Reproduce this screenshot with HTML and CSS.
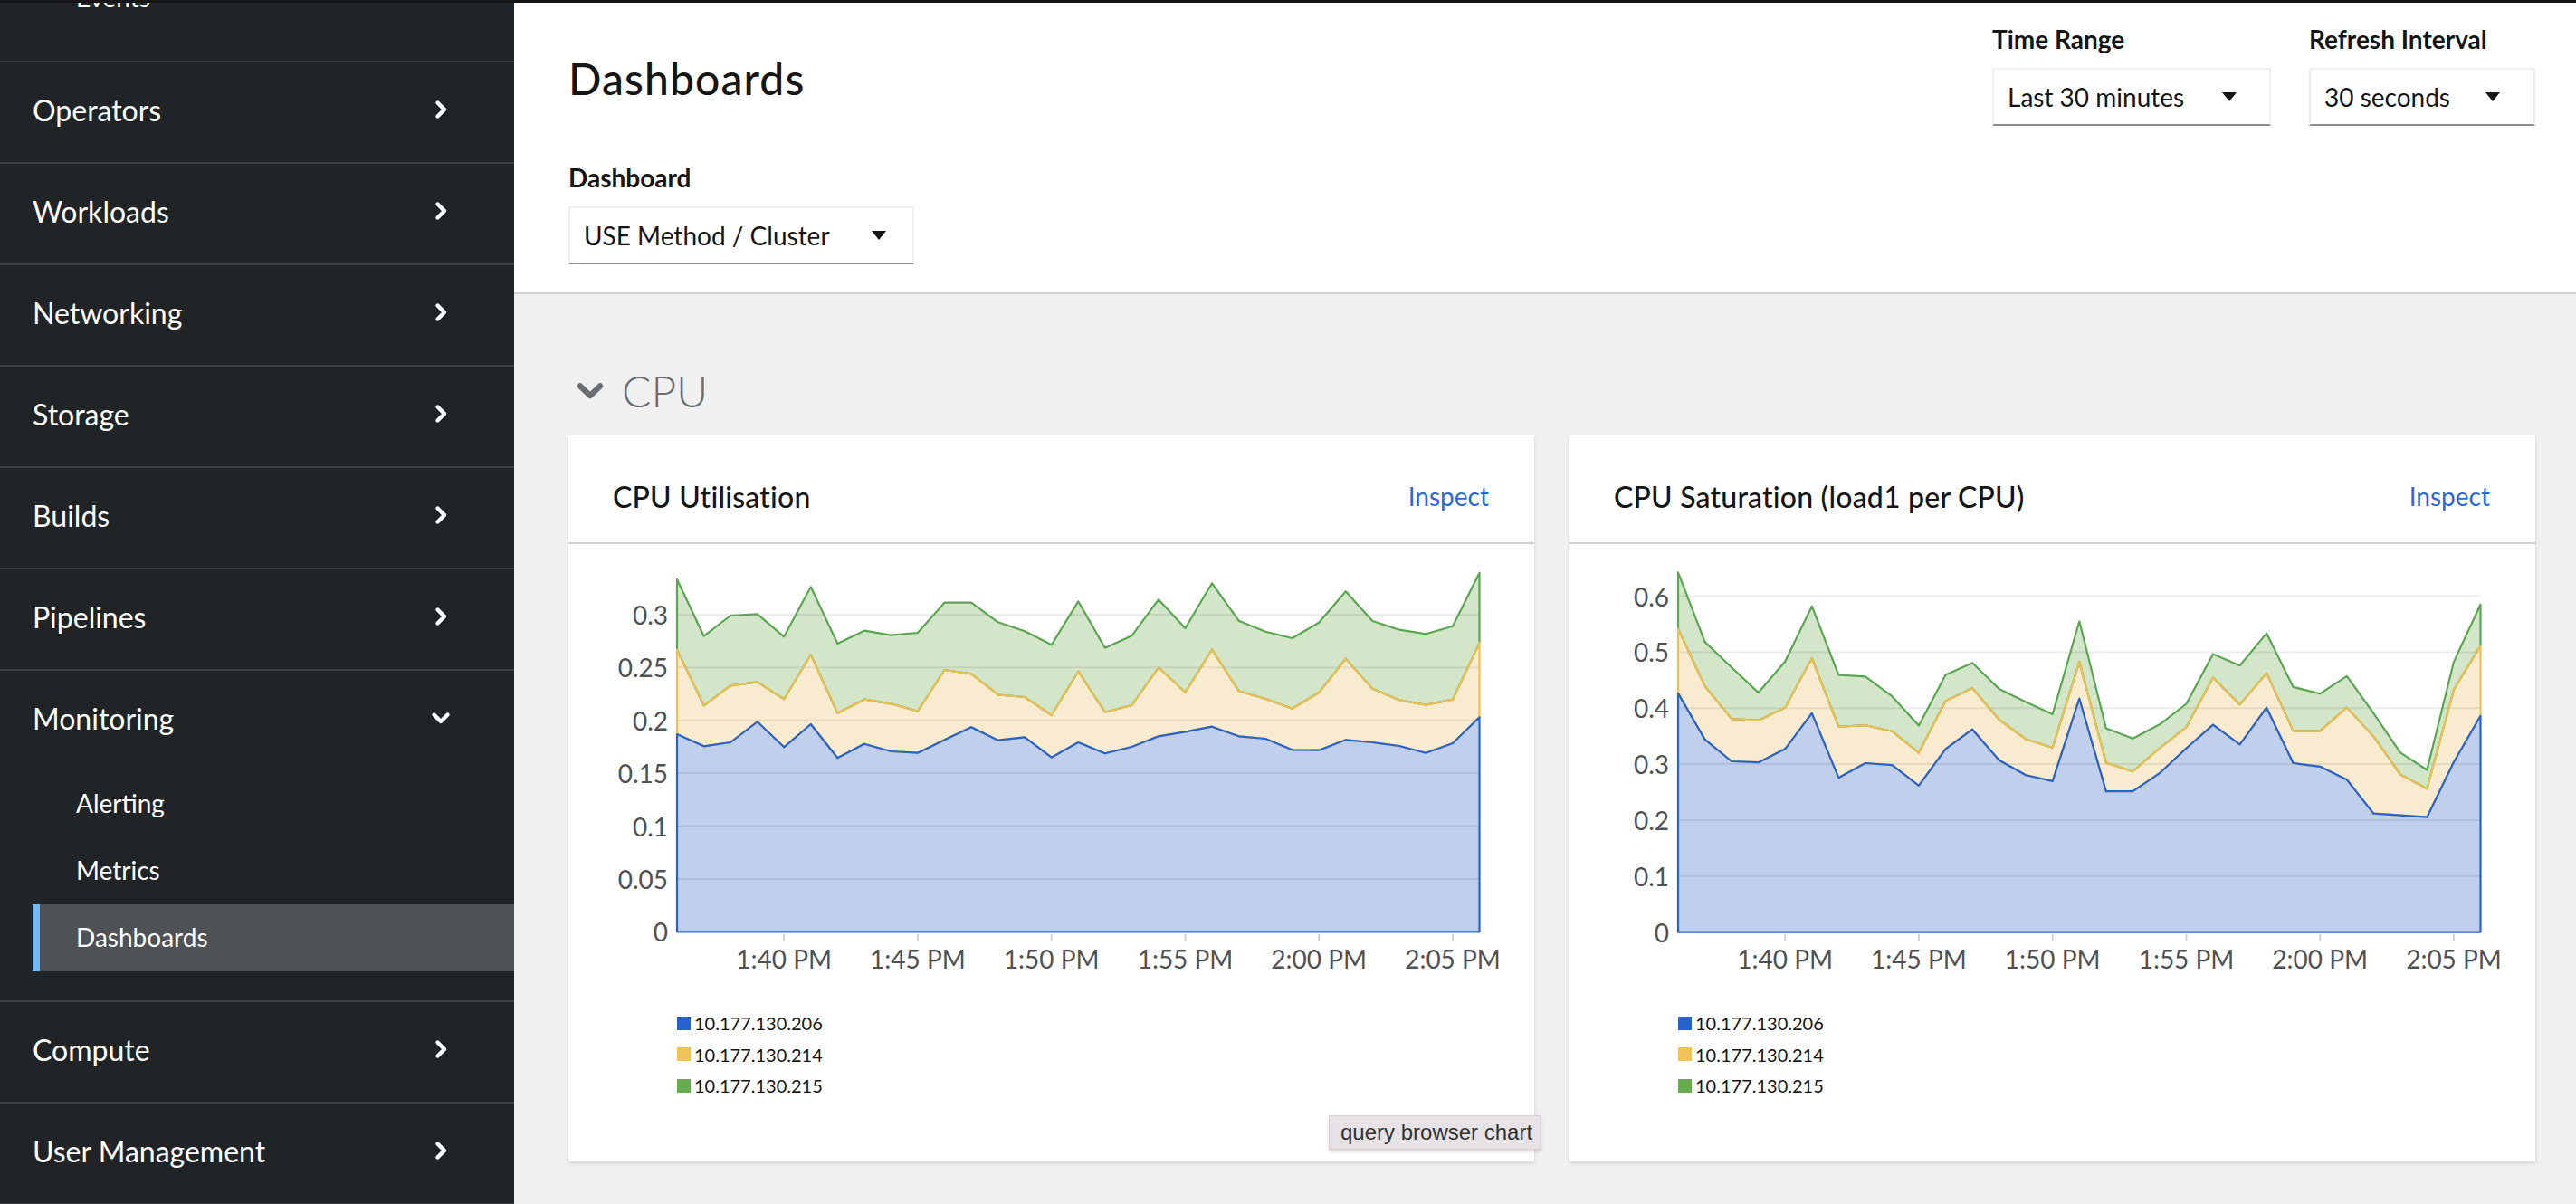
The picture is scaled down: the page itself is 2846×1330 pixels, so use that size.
FILE: index.html
```html
<!DOCTYPE html>
<html lang="en">
<head>
<meta charset="utf-8">
<title>Dashboards</title>
<link rel="stylesheet" href="styles.css">
</head>
<body>
<div class="app">
  <div class="topbar"></div>
  <div class="layout">
    <nav class="sidebar">
      <div class="nav">
        <section class="nav-section">
          <ul class="subnav">
            <li><a class="subnav-link">Events</a></li>
          </ul>
        </section>
        <section class="nav-section">
          <a class="nav-link"><span>Operators</span><span class="nav-icon"><svg width="15" height="22" viewBox="0 0 15 22"><path d="M3.5 3.5 L11 11 L3.5 18.5" fill="none" stroke="#fff" stroke-width="4.4" stroke-linecap="round" stroke-linejoin="round"/></svg></span></a>
        </section>
        <section class="nav-section">
          <a class="nav-link"><span>Workloads</span><span class="nav-icon"><svg width="15" height="22" viewBox="0 0 15 22"><path d="M3.5 3.5 L11 11 L3.5 18.5" fill="none" stroke="#fff" stroke-width="4.4" stroke-linecap="round" stroke-linejoin="round"/></svg></span></a>
        </section>
        <section class="nav-section">
          <a class="nav-link"><span>Networking</span><span class="nav-icon"><svg width="15" height="22" viewBox="0 0 15 22"><path d="M3.5 3.5 L11 11 L3.5 18.5" fill="none" stroke="#fff" stroke-width="4.4" stroke-linecap="round" stroke-linejoin="round"/></svg></span></a>
        </section>
        <section class="nav-section">
          <a class="nav-link"><span>Storage</span><span class="nav-icon"><svg width="15" height="22" viewBox="0 0 15 22"><path d="M3.5 3.5 L11 11 L3.5 18.5" fill="none" stroke="#fff" stroke-width="4.4" stroke-linecap="round" stroke-linejoin="round"/></svg></span></a>
        </section>
        <section class="nav-section">
          <a class="nav-link"><span>Builds</span><span class="nav-icon"><svg width="15" height="22" viewBox="0 0 15 22"><path d="M3.5 3.5 L11 11 L3.5 18.5" fill="none" stroke="#fff" stroke-width="4.4" stroke-linecap="round" stroke-linejoin="round"/></svg></span></a>
        </section>
        <section class="nav-section">
          <a class="nav-link"><span>Pipelines</span><span class="nav-icon"><svg width="15" height="22" viewBox="0 0 15 22"><path d="M3.5 3.5 L11 11 L3.5 18.5" fill="none" stroke="#fff" stroke-width="4.4" stroke-linecap="round" stroke-linejoin="round"/></svg></span></a>
        </section>
        <section class="nav-section">
          <a class="nav-link"><span>Monitoring</span><span class="nav-icon"><svg width="22" height="15" viewBox="0 0 22 15"><path d="M3.5 3.5 L11 11 L18.5 3.5" fill="none" stroke="#fff" stroke-width="4.4" stroke-linecap="round" stroke-linejoin="round"/></svg></span></a>
          <ul class="subnav">
            <li><a class="subnav-link">Alerting</a></li>
            <li><a class="subnav-link">Metrics</a></li>
            <li><a class="subnav-link is-current">Dashboards</a></li>
          </ul>
        </section>
        <section class="nav-section">
          <a class="nav-link"><span>Compute</span><span class="nav-icon"><svg width="15" height="22" viewBox="0 0 15 22"><path d="M3.5 3.5 L11 11 L3.5 18.5" fill="none" stroke="#fff" stroke-width="4.4" stroke-linecap="round" stroke-linejoin="round"/></svg></span></a>
        </section>
        <section class="nav-section">
          <a class="nav-link"><span>User Management</span><span class="nav-icon"><svg width="15" height="22" viewBox="0 0 15 22"><path d="M3.5 3.5 L11 11 L3.5 18.5" fill="none" stroke="#fff" stroke-width="4.4" stroke-linecap="round" stroke-linejoin="round"/></svg></span></a>
        </section>
      </div>
    </nav>

    <main class="main">
      <header class="page-header">
        <div class="header-left">
          <h1 class="page-title">Dashboards</h1>
          <div class="field field--dashboard">
            <div class="field-label">Dashboard</div>
            <div class="select select--dashboard"><span>USE Method / Cluster</span><svg class="caret" width="16" height="10" viewBox="0 0 16 10"><polygon points="0,0 16,0 8,10" fill="#151515"/></svg></div>
          </div>
        </div>
        <div class="header-right">
          <div class="field">
            <div class="field-label">Time Range</div>
            <div class="select select--time"><span>Last 30 minutes</span><svg class="caret" width="16" height="10" viewBox="0 0 16 10"><polygon points="0,0 16,0 8,10" fill="#151515"/></svg></div>
          </div>
          <div class="field">
            <div class="field-label">Refresh Interval</div>
            <div class="select select--refresh"><span>30 seconds</span><svg class="caret" width="16" height="10" viewBox="0 0 16 10"><polygon points="0,0 16,0 8,10" fill="#151515"/></svg></div>
          </div>
        </div>
      </header>

      <div class="content">
        <h2 class="group-title"><svg class="group-chevron" width="30" height="20" viewBox="0 0 30 20"><path d="M4 4.5 L15 15 L26 4.5" fill="none" stroke="#6a6e73" stroke-width="6.5" stroke-linecap="round" stroke-linejoin="round"/></svg><span>CPU</span></h2>
        <div class="cards">
          <article class="card">
            <div class="card-header">
              <h3 class="card-title">CPU Utilisation</h3>
              <a class="card-link">Inspect</a>
            </div>
            <div class="card-body">
              <svg class="chart" id="chart-util" width="1067" height="480"></svg>
              <ul class="legend">
                <li><span class="swatch swatch--blue"></span>10.177.130.206</li>
                <li><span class="swatch swatch--yellow"></span>10.177.130.214</li>
                <li><span class="swatch swatch--green"></span>10.177.130.215</li>
              </ul>
            </div>
            <div class="tooltip">query browser chart</div>
          </article>
          <article class="card">
            <div class="card-header">
              <h3 class="card-title">CPU Saturation (load1 per CPU)</h3>
              <a class="card-link">Inspect</a>
            </div>
            <div class="card-body">
              <svg class="chart" id="chart-sat" width="1067" height="480"></svg>
              <ul class="legend">
                <li><span class="swatch swatch--blue"></span>10.177.130.206</li>
                <li><span class="swatch swatch--yellow"></span>10.177.130.214</li>
                <li><span class="swatch swatch--green"></span>10.177.130.215</li>
              </ul>
            </div>
          </article>
        </div>
      </div>
    </main>
  </div>
</div>
<script src="script.js"></script>
</body>
</html>
```

FILE: styles.css
```css
* { box-sizing: border-box; }

html, body {
  margin: 0;
  padding: 0;
  width: 2846px;
  height: 1330px;
  overflow: hidden;
}

body {
  font-family: Lato, "Liberation Sans", sans-serif;
  color: #151515;
  background: #f0f0f0;
}

.app {
  display: flex;
  flex-direction: column;
  height: 1330px;
}

.topbar {
  flex: none;
  height: 3px;
  background: #151515;
}

.layout {
  flex: 1;
  display: flex;
  min-height: 0;
}

/* ---------- sidebar ---------- */
.sidebar {
  flex: none;
  width: 568px;
  background: #212427;
  overflow: hidden;
}

.nav {
  margin-top: -42px;
}

.nav-section {
  border-bottom: 2px solid #3c3f42;
}

.nav-link {
  height: 110px;
  display: flex;
  align-items: center;
  justify-content: space-between;
  padding: 0 70px 6px 36px;
  color: #fff;
  font-size: 32px;
  text-decoration: none;
}

.nav-icon {
  width: 22px;
  display: flex;
  justify-content: center;
  align-items: center;
}

.nav-icon svg { display: block; }

.subnav {
  list-style: none;
  margin: 0;
  padding: 0 0 32px 36px;
}

.subnav-link {
  height: 74px;
  display: flex;
  align-items: center;
  padding: 0 0 2px 40px;
  border-left: 8px solid transparent;
  color: #fff;
  font-size: 28px;
}

.subnav-link.is-current {
  background: #4f5255;
  border-left-color: #73bcf7;
}

/* ---------- main ---------- */
.main {
  flex: 1;
  min-width: 0;
  display: flex;
  flex-direction: column;
  background: #f0f0f0;
}

.page-header {
  flex: none;
  display: flex;
  justify-content: space-between;
  align-items: flex-start;
  padding: 22px 45px 31px 60px;
  background: #fff;
  border-bottom: 2px solid #d2d2d2;
}

.header-left {
  display: flex;
  flex-direction: column;
}

.page-title {
  margin: 32px 0 0;
  font-size: 48px;
  line-height: 60px;
  font-weight: 500;
  letter-spacing: 1.1px;
  color: #151515;
}

.field--dashboard {
  margin-top: 61px;
}

.header-right {
  display: flex;
  gap: 42px;
}

.field-label {
  font-size: 28px;
  line-height: 36px;
  font-weight: 700;
  color: #151515;
  margin-bottom: 14px;
}

.select {
  height: 64px;
  display: flex;
  align-items: center;
  justify-content: space-between;
  padding: 0 34px 0 15px;
  border: 2px solid #f0f0f0;
  border-bottom-color: #8a8d90;
  background: #fff;
  font-size: 28px;
  color: #151515;
}

.select--dashboard { width: 382px; padding-right: 29px; }
.select--time { width: 308px; padding-right: 36px; }
.select--refresh { width: 250px; padding-right: 37px; }

.caret { display: block; flex: none; }

/* ---------- content ---------- */
.content {
  flex: 1;
  padding: 76px 45px 0 60px;
}

.group-title {
  display: flex;
  align-items: center;
  gap: 20px;
  margin: 0 0 20px;
  padding-left: 9px;
  height: 60px;
  font-size: 48px;
  font-weight: 300;
  color: #6a6e73;
}

.group-chevron { display: block; margin-top: 2px; }

.cards {
  display: grid;
  grid-template-columns: 1fr 1fr;
  column-gap: 39px;
}

.card {
  position: relative;
  background: #fff;
  box-shadow: 0 2px 4px rgba(3, 3, 3, 0.10), 0 0 2px rgba(3, 3, 3, 0.06);
}

.card-header {
  height: 120px;
  display: flex;
  align-items: center;
  justify-content: space-between;
  padding: 16px 50px 0 49px;
  border-bottom: 2px solid #d2d2d2;
}

.card-title {
  margin: 0;
  font-size: 32px;
  font-weight: 500;
  letter-spacing: 0.2px;
  color: #151515;
}

.card-link {
  font-size: 28px;
  color: #2b6ad2;
  text-decoration: none;
}

.card-body {
  padding-bottom: 66px;
}

.chart {
  display: block;
}

.chart .ylabel {
  font-family: Lato, "Liberation Sans", sans-serif;
  font-size: 28px;
  fill: #4f5255;
  text-anchor: end;
  dominant-baseline: central;
}

.chart .xlabel {
  font-family: Lato, "Liberation Sans", sans-serif;
  font-size: 28px;
  fill: #4f5255;
  text-anchor: middle;
  dominant-baseline: central;
}

.chart .grid { stroke: rgba(0, 0, 0, 0.075); stroke-width: 2; }
.chart .tick { stroke: #d2d2d2; stroke-width: 2; }

.chart .fill--blue { fill: #bfcfec; }
.chart .fill--yellow { fill: #f9ebcf; }
.chart .fill--green { fill: #d3e6ca; }

.chart .line { fill: none; stroke-width: 2.2; stroke-linejoin: round; }
.chart .line--blue { stroke: #2862cc; }
.chart .line--yellow { stroke: #ecc055; }
.chart .line--green { stroke: #5ca552; }

.legend {
  list-style: none;
  margin: 32px 0 0;
  padding: 0 0 0 120px;
}

.legend li {
  display: flex;
  align-items: center;
  height: 34.5px;
  font-size: 20px;
  color: #151515;
}

.swatch {
  width: 15px;
  height: 15px;
  margin-right: 4px;
  flex: none;
}

.swatch--blue { background: #2a62cc; }
.swatch--yellow { background: #efc25a; }
.swatch--green { background: #67ad50; }

.tooltip {
  position: absolute;
  left: 840px;
  top: 751px;
  height: 38px;
  display: flex;
  align-items: center;
  padding: 0 8px 0 12px;
  background: #e6e2e6;
  border: 1px solid #d6d2d6;
  box-shadow: 0 2px 4px rgba(0, 0, 0, 0.16);
  font-family: "Liberation Sans", Arial, sans-serif;
  font-size: 24px;
  color: #333;
  white-space: nowrap;
}
```

FILE: script.js
```js
(function () {
  var X0 = 120, DX = 29.55, N = 31;
  var xs = [];
  for (var i = 0; i < N; i++) xs.push(+(X0 + DX * i).toFixed(1));
  var XR = xs[N - 1];
  var TIMES = ['1:40 PM', '1:45 PM', '1:50 PM', '1:55 PM', '2:00 PM', '2:05 PM'];

  var charts = {
    'chart-util': {
      zero: 428.3,
      step: 58.4,
      labels: ['0', '0.05', '0.1', '0.15', '0.2', '0.25', '0.3'],
      blue: [210, 223.3, 219, 196.3, 224.3, 199, 236.3, 220.7, 229, 230.7, 216.3, 202.3, 216.7, 213.3, 235.7, 219, 231.3, 224, 212.3, 207.3, 201.7, 212.3, 215, 227.3, 227.7, 216.3, 219, 223, 230.7, 220, 191.3],
      yellow: [116.7, 178.3, 156.3, 152.3, 171.3, 122.3, 186.7, 171.7, 176.3, 184.7, 139, 143.3, 166.3, 169, 189, 140.7, 185.7, 178, 136.3, 163.7, 116.7, 162.3, 171, 181.7, 164, 126.7, 159.7, 172.3, 177.7, 171.7, 109],
      green: [39, 101.7, 79, 77.3, 102.3, 47.3, 110, 95.7, 100.7, 98, 64.7, 64.7, 86.3, 96.3, 111.3, 63.3, 114.7, 101.3, 61.3, 93, 43.3, 84.7, 96.7, 104, 86.7, 52.3, 85, 94.7, 99.3, 90.7, 31.7]
    },
    'chart-sat': {
      zero: 428.6,
      step: 61.85,
      labels: ['0', '0.1', '0.2', '0.3', '0.4', '0.5', '0.6'],
      blue: [164.9, 215.9, 240, 241.2, 226.3, 186.9, 258.2, 242, 244.1, 266.9, 226.3, 204.7, 238.7, 255.3, 261.9, 170.7, 273.1, 273.1, 253.2, 225.5, 199.7, 221.3, 180.7, 242, 245.8, 260.3, 297.6, 299.7, 301.7, 240.8, 189.8],
      yellow: [93.6, 157, 193.1, 194.8, 180.7, 126, 201.8, 200.2, 206.8, 230.4, 173.2, 159.1, 194, 215.5, 225, 130.1, 241.6, 251.2, 225.5, 202.2, 147.5, 177.4, 142.5, 206.4, 206.4, 180.7, 212.6, 254.5, 270.2, 160.8, 112.3],
      green: [31.4, 108.1, 136.3, 164.1, 129.7, 68.7, 144.6, 146.3, 168.2, 200.6, 144.6, 131.3, 160, 174.5, 188.1, 85.3, 203.5, 214.7, 199.3, 176.5, 121.4, 134.2, 98.6, 157.9, 165.3, 145.8, 186.9, 230.4, 249.5, 130.1, 66.7]
    }
  };

  function pts(arr) {
    return arr.map(function (y, i) { return xs[i] + ',' + y; });
  }

  function draw(id, c) {
    var svg = document.getElementById(id);
    if (!svg) return;
    var blueD = 'M' + X0 + ',' + c.zero + ' L' + pts(c.blue).join(' L') + ' L' + XR + ',' + c.zero + ' Z';
    var yellowD = 'M' + pts(c.yellow).join(' L') + ' L' + pts(c.blue).reverse().join(' L') + ' Z';
    var greenD = 'M' + pts(c.green).join(' L') + ' L' + pts(c.yellow).reverse().join(' L') + ' Z';
    var h = '';
    h += '<path class="fill fill--green" d="' + greenD + '"/>';
    h += '<path class="fill fill--yellow" d="' + yellowD + '"/>';
    h += '<path class="fill fill--blue" d="' + blueD + '"/>';
    c.labels.forEach(function (t, k) {
      var y = +(c.zero - k * c.step).toFixed(1);
      if (k > 0) h += '<line class="grid" x1="' + X0 + '" x2="' + XR + '" y1="' + y + '" y2="' + y + '"/>';
      h += '<text class="ylabel" x="110" y="' + y + '">' + t + '</text>';
    });
    h += '<path class="line line--green" d="' + greenD + '"/>';
    h += '<path class="line line--yellow" d="' + yellowD + '"/>';
    h += '<path class="line line--blue" d="' + blueD + '"/>';
    TIMES.forEach(function (t, k) {
      var x = xs[4 + 5 * k];
      h += '<line class="tick" x1="' + x + '" x2="' + x + '" y1="431" y2="439"/>';
      h += '<text class="xlabel" x="' + x + '" y="458">' + t + '</text>';
    });
    svg.innerHTML = h;
  }

  Object.keys(charts).forEach(function (id) { draw(id, charts[id]); });
})();
```
